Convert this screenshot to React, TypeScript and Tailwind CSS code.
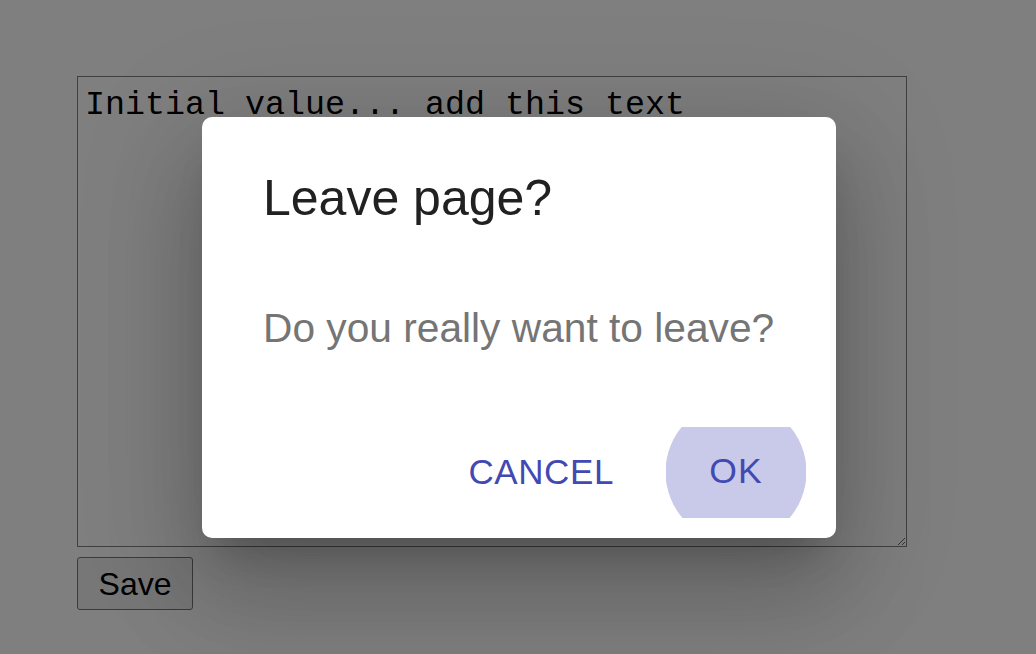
import React from "react";

export default function App() {
  return (
    <div className="relative w-[1036px] h-[654px] overflow-hidden bg-white">
      <div className="flex flex-col items-start gap-[10px] pl-[77px] pt-[76px]">
        <textarea
          defaultValue="Initial value... add this text"
          className="block w-[830px] h-[471px] border border-[#808080] bg-white pl-[7px] pr-[8px] pt-[9px] text-black text-[33.33px] leading-[38px] outline-none"
          style={{ fontFamily: '"Liberation Mono", monospace', resize: "both" }}
        />
        <button
          className="w-[116px] h-[53px] rounded-[3px] border border-[#767676] bg-[#efefef] text-black text-[32px] leading-none"
          style={{ fontFamily: '"Liberation Sans", Arial, sans-serif' }}
        >
          Save
        </button>
      </div>

      <div className="absolute inset-0 flex items-center justify-center bg-[rgba(0,0,0,0.5)]">
        <div
          className="ml-[2px] w-[634px] h-[421px] rounded-[10px] bg-white flex flex-col shadow-[0_27px_37px_-17px_rgba(0,0,0,0.2),0_60px_95px_8px_rgba(0,0,0,0.14),0_22px_115px_20px_rgba(0,0,0,0.12)]"
          style={{ fontFamily: '"Liberation Sans", Arial, sans-serif' }}
        >
          <div className="pl-[61px] pr-[60px] pt-[41px] pb-[40px]">
            <h2 className="text-[50px] leading-[80px] text-[#212121] font-normal">Leave page?</h2>
          </div>
          <div className="pl-[61px] pr-[40px] pt-[20px] pb-[20px]">
            <p className="text-[40.7px] leading-[60px] text-[#757575] mb-[30px] whitespace-nowrap">Do you really want to leave?</p>
          </div>
          <div className="flex justify-end items-center gap-[12px] pr-[30px] pt-[19px]">
            <button className="h-[91px] px-[40px] text-[35px] tracking-[0.6px] text-[#4349b3] uppercase">
              Cancel
            </button>
            <button className="relative h-[91px] w-[140px] overflow-hidden text-[35.5px] tracking-[1px] text-[#4349b3]">
              <span className="absolute left-1/2 top-1/2 w-[141px] h-[141px] -translate-x-1/2 -translate-y-1/2 rounded-full bg-[#c9cae9]" />
              <span className="relative">OK</span>
            </button>
          </div>
        </div>
      </div>
    </div>
  );
}
